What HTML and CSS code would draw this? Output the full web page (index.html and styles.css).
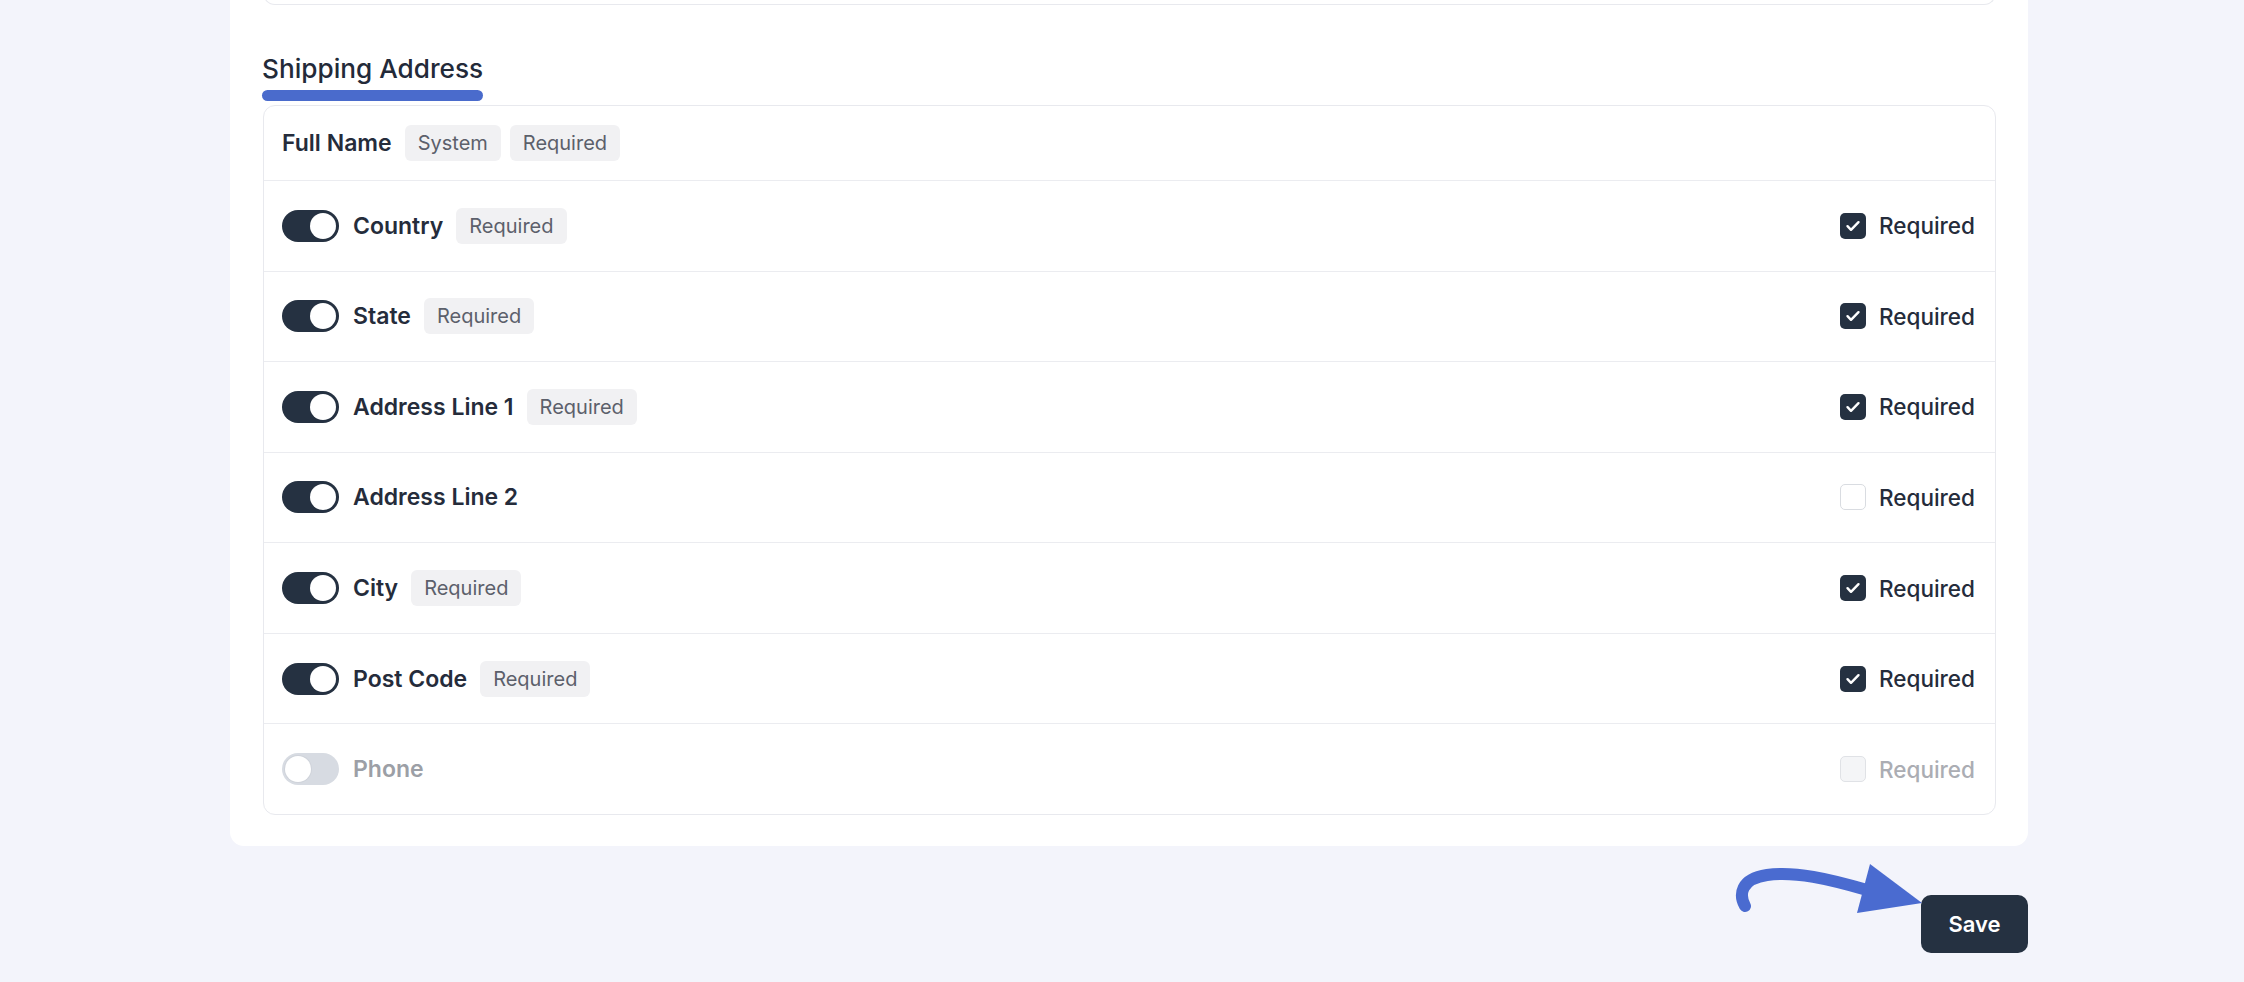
FILE: index.html
```html
<!DOCTYPE html>
<html lang="en">
<head>
  <meta charset="UTF-8">
  <title>Checkout Fields</title>
  <link rel="stylesheet" href="styles.css">
</head>
<body>
  <div class="panel">
    <!-- previous section, scrolled out of view -->
    <div class="prev-card"></div>

    <section class="section">
      <h2 class="section-title">Shipping Address</h2>
      <div class="field-card">
        <div class="field-row head">
          <div class="field-main">
            <span class="field-name">Full Name</span>
            <span class="tag">System</span>
            <span class="tag">Required</span>
          </div>
        </div>

        <div class="field-row">
          <div class="field-main">
            <span class="switch on"></span>
            <span class="field-name">Country</span>
            <span class="tag">Required</span>
          </div>
          <label class="req"><span class="check on"><svg viewBox="0 0 26 26"><path d="M7.5 13.2 L11 16.8 L18.5 9.2"/></svg></span>Required</label>
        </div>

        <div class="field-row">
          <div class="field-main">
            <span class="switch on"></span>
            <span class="field-name">State</span>
            <span class="tag">Required</span>
          </div>
          <label class="req"><span class="check on"><svg viewBox="0 0 26 26"><path d="M7.5 13.2 L11 16.8 L18.5 9.2"/></svg></span>Required</label>
        </div>

        <div class="field-row">
          <div class="field-main">
            <span class="switch on"></span>
            <span class="field-name">Address Line 1</span>
            <span class="tag">Required</span>
          </div>
          <label class="req"><span class="check on"><svg viewBox="0 0 26 26"><path d="M7.5 13.2 L11 16.8 L18.5 9.2"/></svg></span>Required</label>
        </div>

        <div class="field-row">
          <div class="field-main">
            <span class="switch on"></span>
            <span class="field-name">Address Line 2</span>
          </div>
          <label class="req"><span class="check"></span>Required</label>
        </div>

        <div class="field-row">
          <div class="field-main">
            <span class="switch on"></span>
            <span class="field-name">City</span>
            <span class="tag">Required</span>
          </div>
          <label class="req"><span class="check on"><svg viewBox="0 0 26 26"><path d="M7.5 13.2 L11 16.8 L18.5 9.2"/></svg></span>Required</label>
        </div>

        <div class="field-row">
          <div class="field-main">
            <span class="switch on"></span>
            <span class="field-name">Post Code</span>
            <span class="tag">Required</span>
          </div>
          <label class="req"><span class="check on"><svg viewBox="0 0 26 26"><path d="M7.5 13.2 L11 16.8 L18.5 9.2"/></svg></span>Required</label>
        </div>

        <div class="field-row disabled">
          <div class="field-main">
            <span class="switch"></span>
            <span class="field-name">Phone</span>
          </div>
          <label class="req"><span class="check"></span>Required</label>
        </div>
      </div>
    </section>
  </div>

  <!-- Footer actions -->
  <div class="actions">
    <div class="save-wrap">
      <svg class="hint-arrow" width="192" height="56" viewBox="0 0 192 56">
        <path d="M12 44 C 6 33, 7 17, 34 13 C 62 9, 96 17, 134 28" fill="none" stroke="#4a6bd0" stroke-width="12" stroke-linecap="round"/>
        <polygon points="137,2 124,51 189,41" fill="#4a6bd0"/>
      </svg>
      <button class="save-btn" type="button">Save</button>
    </div>
  </div>
</body>
</html>
```

FILE: styles.css
```css
html, body {
  margin: 0;
  padding: 0;
  background: #f3f4fb;
  font-family: Inter, 'Noto Sans', Arial, sans-serif;
  color: #252c3b;
}
/* White settings panel */
.panel {
  margin-left: 230px;
  width: 1798px;
  box-sizing: border-box;
  padding: 0 32px 31px 33px;
  background: #fff;
  border-radius: 0 0 14px 14px;
}
.prev-card {
  height: 24px;
  margin-top: -20px;
  border: 1px solid #e8e9ee;
  border-top: none;
  border-radius: 0 0 12px 12px;
}
/* Section heading */
.section-title {
  display: inline-flex;
  flex-direction: column;
  gap: 5px;
  margin: 48px 0 4px -1px;
  font-size: 26.2px;
  font-weight: 500;
  line-height: 32px;
  color: #232a39;
}
.section-title::after {
  content: '';
  height: 11px;
  border-radius: 6px;
  background: #4a6bcc;
}
/* Fields card */
.field-card {
  border: 1px solid #e8e9ee;
  border-radius: 12px;
}
.field-row {
  display: flex;
  align-items: center;
  justify-content: space-between;
  box-sizing: border-box;
  height: 90.57px;
  padding: 0 20px 0 18px;
  border-top: 1px solid #ebecf0;
}
.field-row.head {
  height: 74px;
  border-top: none;
}
.field-main {
  display: flex;
  align-items: center;
}
.field-name {
  font-size: 23px;
  font-weight: 600;
  margin-right: 13px;
}
.switch + .field-name {
  margin-left: 14px;
}
.tag {
  display: inline-flex;
  align-items: center;
  height: 36px;
  padding: 0 13px;
  margin-right: 9px;
  border-radius: 6px;
  background: #f1f1f3;
  color: #5c606b;
  font-size: 20px;
}
/* Toggle switch */
.switch {
  position: relative;
  width: 57px;
  height: 32px;
  border-radius: 16px;
  background: #d7dbe2;
}
.switch::after {
  content: '';
  position: absolute;
  top: 3px;
  left: 3px;
  width: 26px;
  height: 26px;
  border-radius: 50%;
  background: #fff;
  box-shadow: 0 0 0 1px #cfd3da;
}
.switch.on {
  background: #253141;
}
.switch.on::after {
  left: 28px;
  box-shadow: none;
}
/* Required checkbox */
.req {
  display: flex;
  align-items: center;
  gap: 13px;
  font-size: 22.5px;
  font-weight: 500;
  color: #252c3b;
}
.check {
  width: 26px;
  height: 26px;
  box-sizing: border-box;
  border: 1.5px solid #d9dce1;
  border-radius: 5px;
  background: #fff;
}
.check.on {
  border: none;
  background: #253141;
}
.check svg {
  display: block;
  width: 26px;
  height: 26px;
}
.check svg path {
  fill: none;
  stroke: #fff;
  stroke-width: 2.4;
  stroke-linecap: round;
  stroke-linejoin: round;
}
.disabled .field-name {
  color: #9c9fa6;
}
.disabled .req {
  color: #abadb3;
}
.disabled .check {
  background: #f4f5f7;
  border-color: #e0e2e6;
}
/* Footer */
.actions {
  display: flex;
  justify-content: flex-end;
  margin-left: 230px;
  width: 1798px;
  margin-top: 49px;
}
.save-wrap {
  position: relative;
}
.hint-arrow {
  position: absolute;
  left: -188px;
  top: -33px;
}
.save-btn {
  display: block;
  width: 107px;
  height: 58px;
  border: none;
  border-radius: 10px;
  background: #253141;
  color: #fff;
  font-family: Inter, 'Noto Sans', Arial, sans-serif;
  font-size: 22px;
  font-weight: 600;
  cursor: pointer;
}
```
